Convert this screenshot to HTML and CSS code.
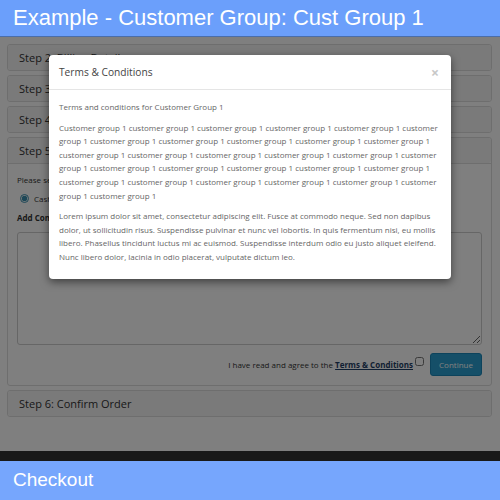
FILE: index.html
```html
<!DOCTYPE html>
<html lang="en">
<head>
  <meta charset="UTF-8" />
  <title>Checkout</title>
  <link rel="stylesheet" href="styles.css">
</head>
<body>
  <div class="topbar">Example - Customer Group: Cust Group 1</div>

  <div class="content">
    <div class="panels">
      <div class="panel"><div class="panel-heading">Step 2: Billing Details</div></div>
      <div class="panel"><div class="panel-heading">Step 3: Delivery Details</div></div>
      <div class="panel"><div class="panel-heading">Step 4: Delivery Method</div></div>
      <div class="panel">
        <div class="panel-heading">Step 5: Payment Method</div>
        <div class="panel-body">
          <p class="note">Please select the preferred payment method to use on this order.</p>
          <label class="radio"><input type="radio" name="payment" checked> Cash On Delivery</label>
          <p class="comments">Add Comments About Your Order</p>
          <textarea class="comment-box"></textarea>
          <div class="agree">
            <span>I have read and agree to the <a href="#" class="terms-link">Terms &amp; Conditions</a></span>
            <input type="checkbox" class="agree-box">
            <button class="btn-continue">Continue</button>
          </div>
        </div>
      </div>
      <div class="panel"><div class="panel-heading">Step 6: Confirm Order</div></div>
    </div>
    <div class="site-footer"></div>

    <div class="backdrop"></div>

    <div class="modal">
      <div class="modal-header">
        <span class="modal-title">Terms &amp; Conditions</span>
        <span class="close">&times;</span>
      </div>
      <div class="modal-body">
        <p>Terms and conditions for Customer Group 1</p>
        <p>Customer group 1 customer group 1 customer group 1 customer group 1 customer group 1 customer group 1 customer group 1 customer group 1 customer group 1 customer group 1 customer group 1 customer group 1 customer group 1 customer group 1 customer group 1 customer group 1 customer group 1 customer group 1 customer group 1 customer group 1 customer group 1 customer group 1 customer group 1 customer group 1 customer group 1 customer group 1 customer group 1 customer group 1 customer group 1</p>
        <p>Lorem ipsum dolor sit amet, consectetur adipiscing elit. Fusce at commodo neque. Sed non dapibus dolor, ut sollicitudin risus. Suspendisse pulvinar et nunc vel lobortis. In quis fermentum nisi, eu mollis libero. Phasellus tincidunt luctus mi ac euismod. Suspendisse interdum odio eu justo aliquet eleifend. Nunc libero dolor, lacinia in odio placerat, vulputate dictum leo.</p>
      </div>
    </div>
  </div>

  <div class="bottombar">Checkout</div>
</body>
</html>
```

FILE: styles.css
```css
body {
  margin: 0;
  height: 500px;
  display: flex;
  flex-direction: column;
  font-family: 'Open Sans', sans-serif;
  overflow: hidden;
}

.topbar {
  background: #6b9ffb;
  color: #fff;
  font-family: 'Liberation Sans', Arial, sans-serif;
  font-size: 22px;
  height: 36px;
  line-height: 36px;
  padding-left: 13px;
  border-bottom: 1px solid #4a6eaa;
}

.bottombar {
  background: #76a6fd;
  color: #fff;
  font-family: 'Liberation Sans', Arial, sans-serif;
  font-size: 19px;
  height: 39px;
  line-height: 38px;
  padding-left: 13px;
}

.content {
  flex: 1;
  position: relative;
  background: #fff;
  display: flex;
  flex-direction: column;
}

.panels {
  flex: 1;
  padding: 7px 8px 0 7px;
  display: flex;
  flex-direction: column;
  gap: 4px;
}

.panel {
  border: 1px solid #ddd;
  border-radius: 3px;
  background: #fff;
}

.panel-heading {
  background: #f5f5f5;
  color: #333;
  font-size: 11px;
  height: 25px;
  line-height: 25px;
  padding-left: 11px;
  border-radius: 3px;
}

.panel-body {
  border-top: 1px solid #ddd;
  padding: 10px 9px 9px 9px;
  font-size: 8px;
  color: #333;
}

.note {
  margin: 0 0 6px;
}

.radio {
  display: flex;
  align-items: center;
  gap: 5px;
  margin: 8px 0 0 3px;
}

.radio input {
  width: 9px;
  height: 9px;
  margin: 0;
  accent-color: #3b8fae;
}

.comments {
  font-weight: bold;
  margin: 8px 0 9px;
}

.comment-box {
  display: block;
  width: 100%;
  height: 113px;
  box-sizing: border-box;
  border: 1px solid #ccc;
  border-radius: 3px;
  margin: 0;
}

.agree {
  display: flex;
  justify-content: flex-end;
  align-items: center;
  margin-top: 8px;
}

.terms-link {
  color: #1f3e66;
  font-weight: bold;
}

.agree-box {
  width: 9px;
  height: 9px;
  margin: 0 6px 6px 2px;
}

.btn-continue {
  background: #2a9fd0;
  color: #fff;
  border: 1px solid #1b86b8;
  border-radius: 3px;
  font-family: 'Open Sans', sans-serif;
  font-size: 8px;
  width: 52px;
  height: 23px;
}

.site-footer {
  height: 10px;
  background: #333;
}

.backdrop {
  position: absolute;
  inset: 0;
  background: rgba(0, 0, 0, 0.5);
}

.modal {
  position: absolute;
  left: 49px;
  top: 18px;
  width: 402px;
  background: #fff;
  border-radius: 4px;
  box-shadow: 0 3px 9px rgba(0, 0, 0, 0.5);
  color: #666;
}

.modal-header {
  height: 34px;
  padding: 0 10px;
  display: flex;
  align-items: center;
  justify-content: space-between;
  border-bottom: 1px solid #e5e5e5;
}

.modal-title {
  font-size: 10.2px;
  color: #444;
}

.close {
  font-size: 14px;
  color: #c8c8c8;
  font-weight: bold;
  margin-right: 2px;
}

.modal-body {
  padding: 10px 10px 15px;
  font-size: 8px;
  line-height: 13.6px;
}

.modal-body p {
  margin: 0 0 7px;
}

.modal-body p:last-child {
  margin-bottom: 0;
}
```
